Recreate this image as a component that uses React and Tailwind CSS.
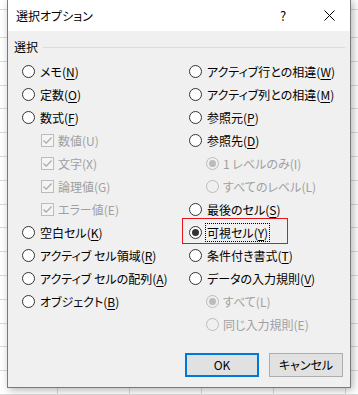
import React from "react";

const Radio = ({ checked, disabled }) => (
  <span
    className={
      disabled
        ? "box-border w-[13px] h-[13px] rounded-full border border-[#bcbcbc] bg-[#f0f0f0] flex items-center justify-center shrink-0"
        : "box-border w-[13px] h-[13px] rounded-full border border-[#333333] bg-white flex items-center justify-center shrink-0"
    }
  >
    {checked && (
      <span
        className={
          disabled
            ? "w-[7px] h-[7px] rounded-full bg-[#bcbcbc]"
            : "w-[7px] h-[7px] rounded-full bg-[#333333]"
        }
      />
    )}
  </span>
);

const Check = () => (
  <span className="box-border w-[13px] h-[13px] border border-[#bcbcbc] bg-[#f4f4f4] flex items-center justify-center shrink-0">
    <svg width="11" height="11" viewBox="0 0 11 11">
      <path d="M1.5 5.5 L4.2 8.2 L9.5 2.5" fill="none" stroke="#a8a8a8" strokeWidth="1.2" />
    </svg>
  </span>
);

const Label = ({ text, k, disabled }) => (
  <span className={disabled ? "text-[#a0a0a0] whitespace-nowrap" : "text-black whitespace-nowrap"}>
    {text}(
    {disabled ? k : <span className="underline underline-offset-2">{k}</span>})
  </span>
);

const RadioRow = ({ text, k, checked }) => (
  <div className="h-[23px] flex items-center gap-[5px]">
    <Radio checked={checked} />
    <Label text={text} k={k} />
  </div>
);

const CheckRow = ({ text, k }) => (
  <div className="h-[23px] flex items-center gap-[4px] pl-[19px]">
    <Check />
    <Label text={text} k={k} disabled />
  </div>
);

const SubRadioRow = ({ text, k, checked }) => (
  <div className="h-[23px] flex items-center gap-[4px] pl-[17px]">
    <Radio checked={checked} disabled />
    <Label text={text} k={k} disabled />
  </div>
);

const GridRow = ({ h }) => (
  <div className={h === 10 ? "h-[10px] flex border-b border-[#dadada]" : h === 30 ? "h-[30px] flex border-b border-[#dadada]" : "h-[25px] flex border-b border-[#dadada]"}>
    <div className="w-[58px] shrink-0 border-r border-[#dadada]" />
    <div className="w-[72px] shrink-0 border-r border-[#dadada]" />
    <div className="w-[72px] shrink-0 border-r border-[#dadada]" />
    <div className="w-[72px] shrink-0 border-r border-[#dadada]" />
    <div className="w-[72px] shrink-0 border-r border-[#dadada]" />
  </div>
);

export default function App() {
  const rows = Array.from({ length: 15 });
  return (
    <div className="relative w-[358px] h-[395px] overflow-hidden bg-white font-['Noto_Sans_CJK_JP','Noto_Sans',sans-serif] text-[12px] leading-none [font-feature-settings:'palt']">
      <div className="absolute inset-0 flex flex-col">
        <GridRow h={10} />
        <GridRow h={30} />
        {rows.map((_, i) => (
          <GridRow key={i} h={25} />
        ))}
      </div>

      <div className="absolute left-[7px] top-[-1px] w-[344px] h-[389px] border border-[#7a7a7a] bg-[#f0f0f0] flex flex-col shadow-[2px_2px_8px_rgba(0,0,0,0.3)]">
        <div className="h-[31px] bg-white flex items-center pl-[8px]">
          <span className="text-black text-[12px]">選択オプション</span>
          <div className="ml-auto w-[50px] flex justify-center text-[13px] text-black">?</div>
          <div className="w-[42px] flex justify-center">
            <svg width="11" height="11" viewBox="0 0 11 11">
              <path d="M0.5 0.5 L10.5 10.5 M10.5 0.5 L0.5 10.5" stroke="#000" strokeWidth="1" />
            </svg>
          </div>
        </div>

        <div className="flex-1 flex flex-col">
          <div className="mt-[6px] h-[20px] flex items-center pl-[6px] pr-[5px]">
            <span className="text-black">選択</span>
            <div className="flex-1 ml-[5px] h-px bg-[#dcdcdc]" />
          </div>

          <div className="mt-[3px] flex pl-[14px]">
            <div className="w-[167px] flex flex-col">
              <RadioRow text="メモ" k="N" />
              <RadioRow text="定数" k="O" />
              <RadioRow text="数式" k="F" />
              <CheckRow text="数値" k="U" />
              <CheckRow text="文字" k="X" />
              <CheckRow text="論理値" k="G" />
              <CheckRow text="エラー値" k="E" />
              <RadioRow text="空白セル" k="K" />
              <RadioRow text="アクティブ セル領域" k="R" />
              <RadioRow text="アクティブ セルの配列" k="A" />
              <RadioRow text="オブジェクト" k="B" />
            </div>
            <div className="flex flex-col">
              <RadioRow text="アクティブ行との相違" k="W" />
              <RadioRow text="アクティブ列との相違" k="M" />
              <RadioRow text="参照元" k="P" />
              <RadioRow text="参照先" k="D" />
              <SubRadioRow text="1 レベルのみ" k="I" checked />
              <SubRadioRow text="すべてのレベル" k="L" />
              <RadioRow text="最後のセル" k="S" />
              <div className="relative h-[23px] flex items-center gap-[3px]">
                <div className="absolute left-[-7px] top-[-3px] w-[106px] h-[26px] border border-[#e8141b]" />
                <Radio checked />
                <span className="border border-dotted border-black px-[1px] h-[19px] flex items-center">
                  <Label text="可視セル" k="Y" />
                </span>
              </div>
              <RadioRow text="条件付き書式" k="T" />
              <RadioRow text="データの入力規則" k="V" />
              <SubRadioRow text="すべて" k="L" checked />
              <SubRadioRow text="同じ入力規則" k="E" />
            </div>
          </div>

          <div className="mt-auto pb-[10px] pr-[7px] flex justify-end gap-[10px]">
            <button className="w-[74px] h-[24px] border-2 border-[#0078d7] bg-[#e1e1e1] text-black text-[12px] flex items-center justify-center">
              OK
            </button>
            <button className="w-[74px] h-[24px] border border-[#adadad] bg-[#e1e1e1] text-black text-[12px] flex items-center justify-center">
              キャンセル
            </button>
          </div>
        </div>
      </div>
    </div>
  );
}
